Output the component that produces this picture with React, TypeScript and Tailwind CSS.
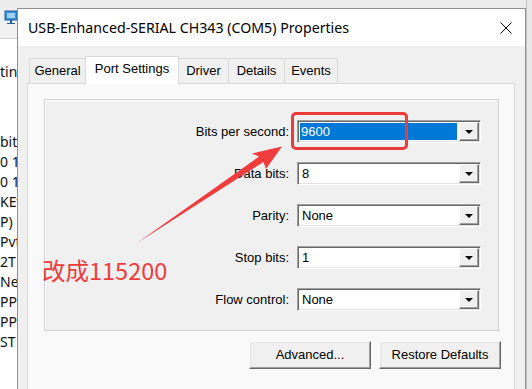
import React from 'react';

const Combo = ({ value, selected }: { value: string; selected?: boolean }) => (
  <div className="flex h-[23px] w-[184px] border border-t-[#a0a0a0] border-l-[#a0a0a0] border-r-white border-b-white bg-white shadow-[inset_1px_1px_0_#696969,inset_-1px_-1px_0_#e3e3e3]">
    <div className="flex flex-1 items-center p-[2px]">
      {selected ? (
        <div className="flex h-full flex-1 items-center bg-[#0078d7] pl-[1px] text-white">{value}</div>
      ) : (
        <div className="pl-[2px]">{value}</div>
      )}
    </div>
    <div className="my-[1px] mr-[1px] flex w-[20px] items-center justify-center border border-t-white border-l-white border-r-[#696969] border-b-[#696969] bg-[#f0f0f0] shadow-[inset_-1px_-1px_0_#a0a0a0]">
      <svg width="8" height="4" viewBox="0 0 8 4">
        <path d="M0 0H8L4 4Z" fill="#000" />
      </svg>
    </div>
  </div>
);

const Row = ({ label, value, selected }: { label: string; value: string; selected?: boolean }) => (
  <div className="flex items-center">
    <div className="w-[244px] text-right">{label}</div>
    <div className="ml-[8px]">
      <Combo value={value} selected={selected} />
    </div>
  </div>
);

const Button = ({ children }: { children: React.ReactNode }) => (
  <button className="flex h-[28px] w-[122px] items-center justify-center border border-t-white border-l-white border-r-[#696969] border-b-[#696969] bg-[#f0f0f0] shadow-[inset_-1px_-1px_0_#a0a0a0,inset_1px_1px_0_#e3e3e3]">
    {children}
  </button>
);

const tabs = [
  { label: 'General', w: 'w-[57px]' },
  { label: 'Port Settings', w: 'w-[94px]', active: true },
  { label: 'Driver', w: 'w-[51px]' },
  { label: 'Details', w: 'w-[57px]' },
  { label: 'Events', w: 'w-[54px]' },
];

// right ends of the list in the window behind, cut by the dialog edge
const leftLines = ['bit', '0 1', '0 1', 'KEv', 'P)', 'Pvt', '2T', 'Net', 'PPP', 'PPT', 'ST'];

export default function App() {
  return (
    <div className="relative flex h-[389px] w-[532px] overflow-hidden bg-[#ececec] font-['Liberation_Sans',Arial,sans-serif] text-[13px] text-black">
      {/* window behind, left side */}
      <div className="flex w-[17px] shrink-0 flex-col">
        <div className="h-[8px] bg-[#ececec]" />
        <div className="h-[30px] bg-[#f0f0f0] pl-[4px] pt-[2px]">
          <svg width="14" height="16" viewBox="0 0 14 16">
            <rect x="1" y="1" width="12" height="9" fill="#3d8fd6" stroke="#1d5f9e" />
            <rect x="3" y="3" width="8" height="5" fill="#9fd0f5" />
            <path d="M6 10V13H3V14H11V13H8V10Z" fill="#1d5f9e" />
          </svg>
        </div>
        <div className="h-px bg-[#cfcfcf]" />
        <div className="flex-1 overflow-hidden whitespace-nowrap bg-white font-['Noto_Sans',sans-serif] text-[14px] leading-[20px] text-[#111]">
          <div className="mt-[23px]">tin</div>
          <div className="mt-[50px]">
            {leftLines.map((t, i) => (
              <div key={i}>{t}</div>
            ))}
          </div>
        </div>
      </div>

      {/* dialog */}
      <div className="mt-[8px] flex w-[509px] shrink-0 flex-col border border-b-0 border-[#8f8f8f]">
        <div className="flex h-[37px] shrink-0 items-center justify-between bg-white pl-[10px] pr-[13px] font-['Noto_Sans',sans-serif] text-[14.2px]">
          <span>USB-Enhanced-SERIAL CH343 (COM5) Properties</span>
          <svg width="12" height="12" viewBox="0 0 12 12">
            <path d="M0.5 0.5L11.5 11.5M11.5 0.5L0.5 11.5" stroke="#000" strokeWidth="1" />
          </svg>
        </div>

        <div className="flex-1 bg-[#f0f0f0] pt-[10px]">
          <div className="flex h-[27px] items-end pl-[12px]">
            {tabs.map((t) => (
              <div
                key={t.label}
                className={`${t.w} -ml-px flex items-center justify-center border border-b-0 border-[#d9d9d9] ${
                  t.active ? 'relative z-10 mb-[-1px] h-[28px] bg-white pb-[3px]' : 'h-[25px] bg-[#f0f0f0]'
                }`}
              >
                {t.label}
              </div>
            ))}
          </div>

          <div className="ml-[9px] h-[400px] w-[488px] border border-[#d9d9d9] bg-[#f9f9f9]">
            <div className="ml-[16px] mt-[15px] flex h-[232px] w-[455px] flex-col gap-[19px] border border-[#cfcfcf] bg-[#f0f0f0] pt-[20px] shadow-[inset_1px_1px_0_#fff]">
              <Row label="Bits per second:" value="9600" selected />
              <Row label="Data bits:" value="8" />
              <Row label="Parity:" value="None" />
              <Row label="Stop bits:" value="1" />
              <Row label="Flow control:" value="None" />
            </div>
            <div className="mt-[10px] flex justify-end gap-[8px] pr-[13px]">
              <Button>Advanced...</Button>
              <Button>Restore Defaults</Button>
            </div>
          </div>
        </div>
      </div>

      {/* window behind, right side */}
      <div className="flex-1 border-l border-[#c4c4c4] bg-[#e8e8e8]" />

      {/* red annotation */}
      <div className="absolute left-[291px] top-[112px] h-[38px] w-[117px] rounded-[5px] border-[3px] border-[#eb3b3b]" />
      <svg className="absolute left-0 top-0" width="532" height="389" viewBox="0 0 532 389">
        <polygon points="137,243 259,156.5 252,153.5 282,146.5 266,169 263.5,162" fill="#f03c3c" />
      </svg>
      <div className="absolute left-[42px] top-[259px] font-['Noto_Sans_CJK_SC',sans-serif] text-[23.5px] leading-none text-[#f03c3c]">
        改成115200
      </div>
    </div>
  );
}
